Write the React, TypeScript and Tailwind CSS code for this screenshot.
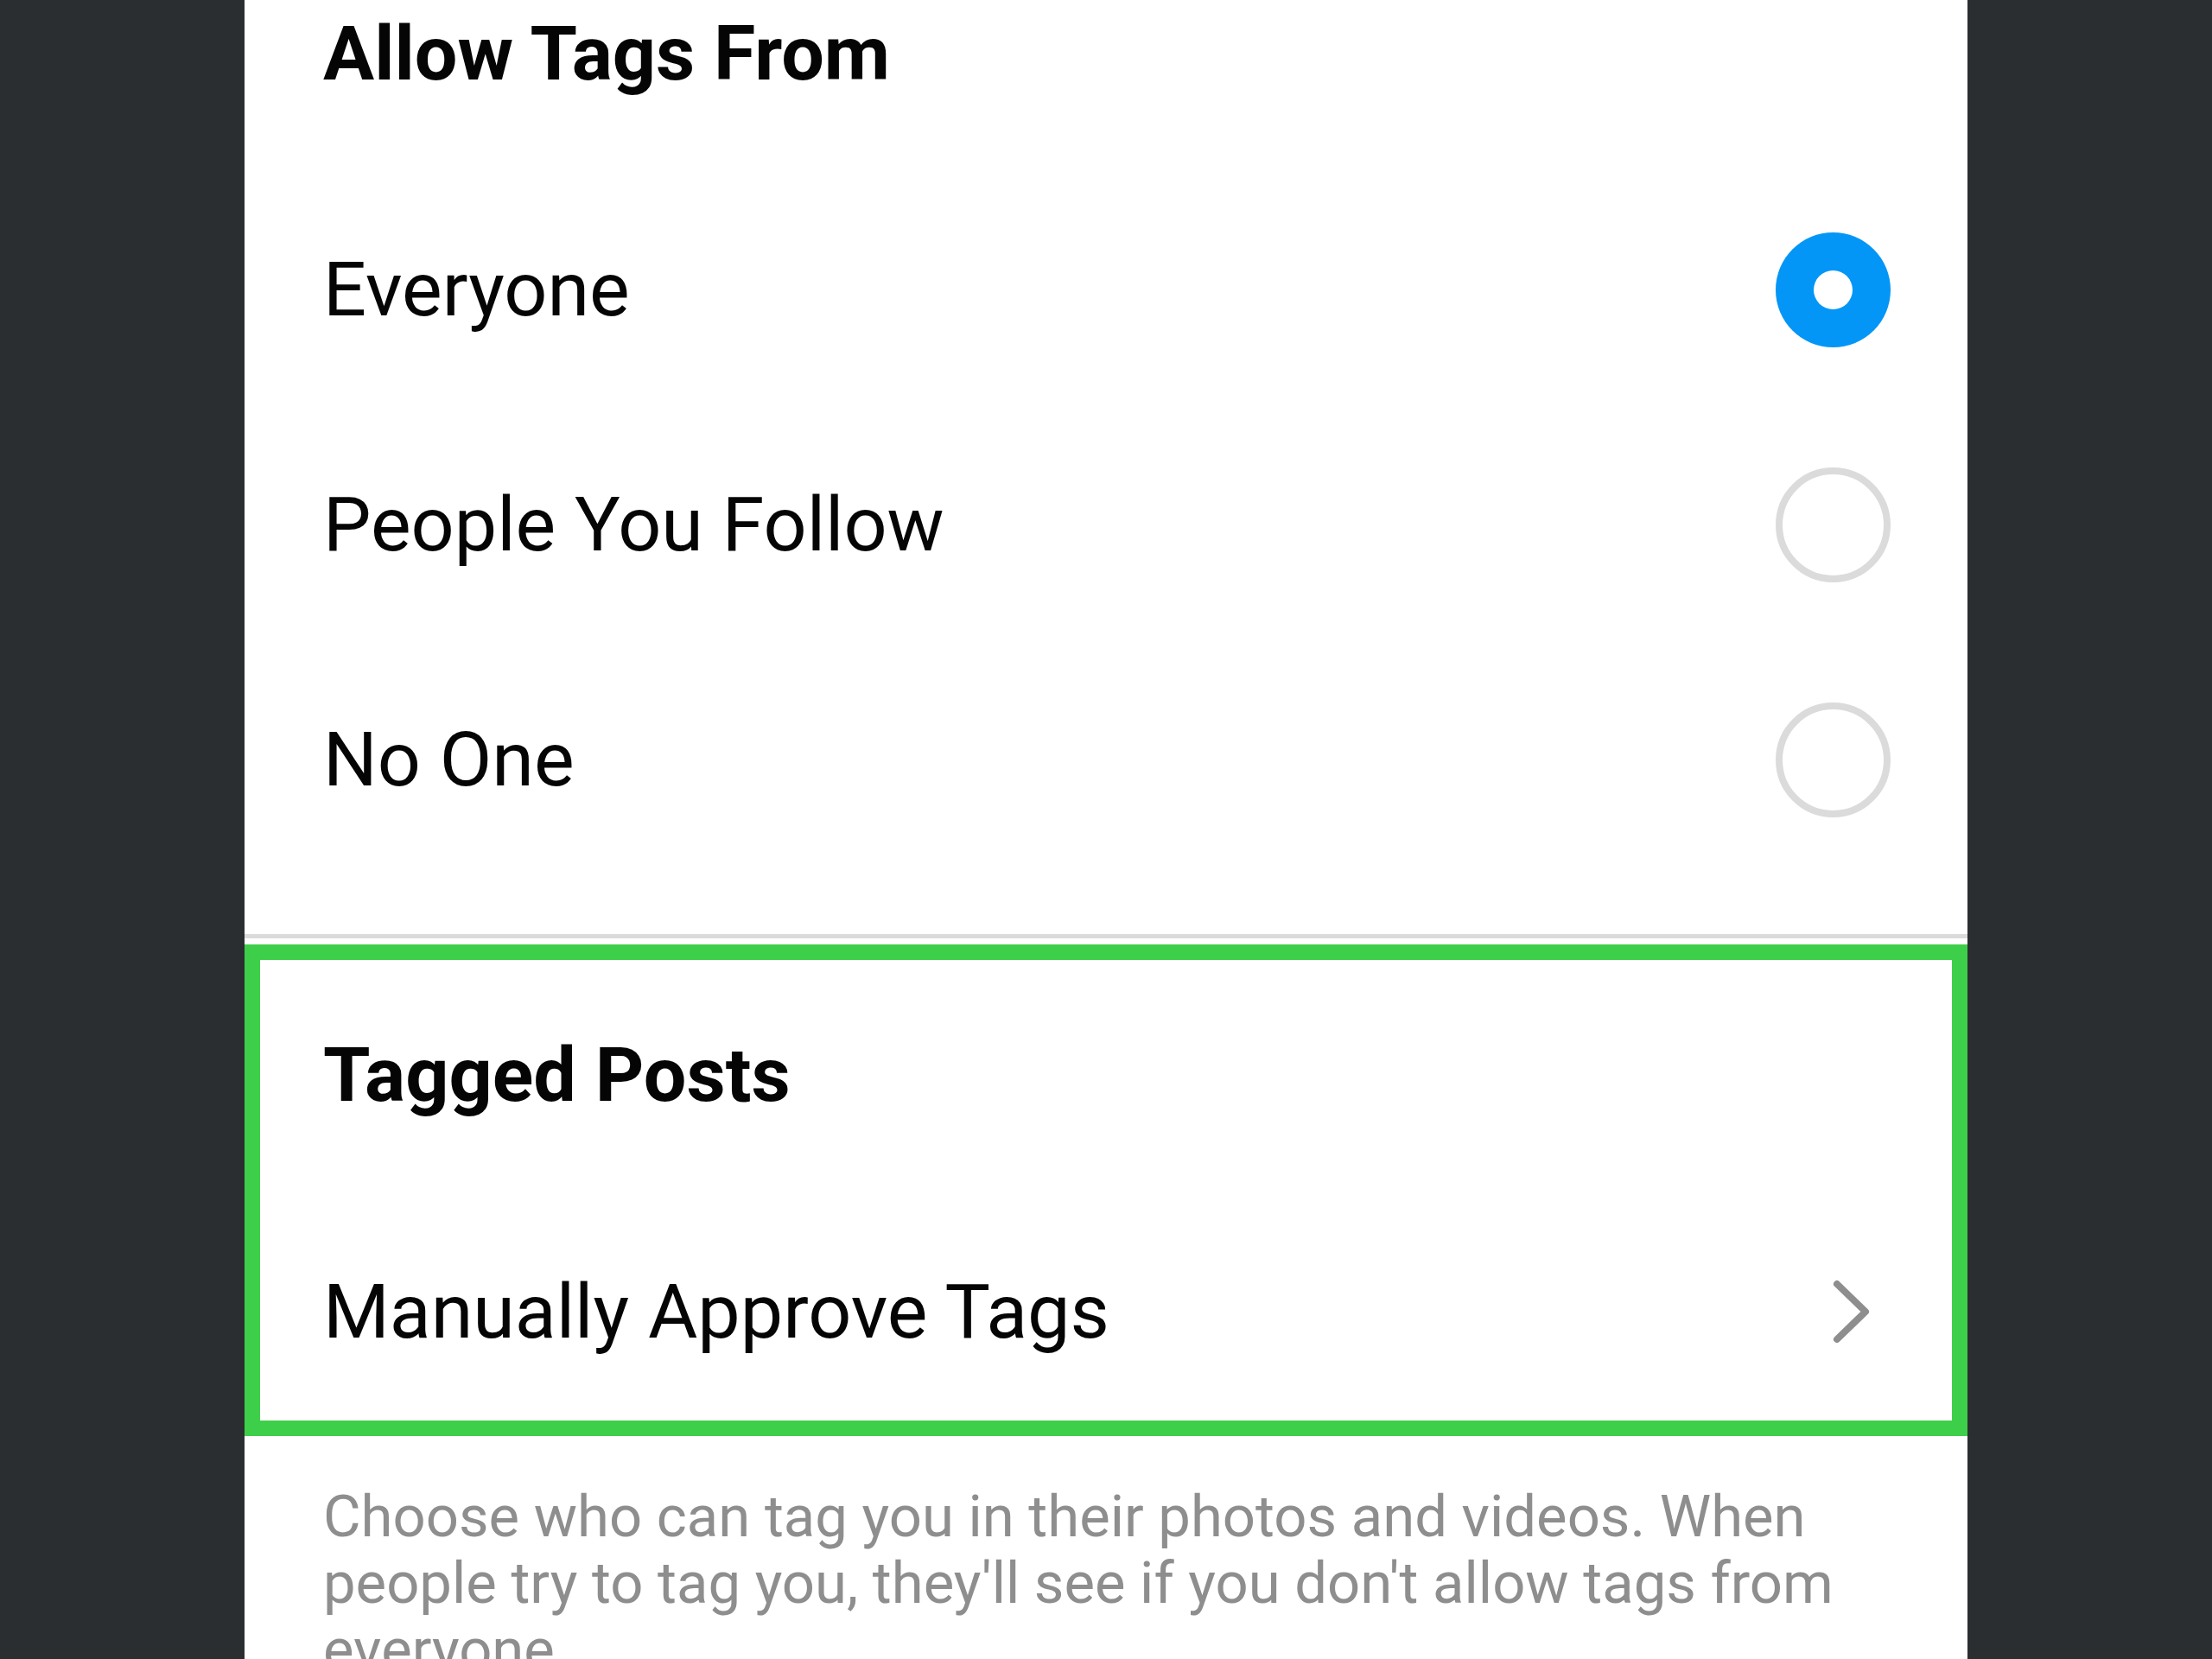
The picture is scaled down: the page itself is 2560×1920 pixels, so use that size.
import { useState } from "react";

const OPTIONS = ["Everyone", "People You Follow", "No One"];

function Radio({ checked }: { checked: boolean }) {
  if (checked) {
    return (
      <div className="flex h-[133px] w-[133px] shrink-0 items-center justify-center rounded-full bg-[#0396f6]">
        <div className="h-[45px] w-[45px] rounded-full bg-white" />
      </div>
    );
  }
  return <div className="h-[133px] w-[133px] shrink-0 rounded-full border-[8px] border-[#dbdbdb]" />;
}

function Chevron() {
  return (
    <svg width="49" height="80" viewBox="0 0 49 80" fill="none">
      <polyline
        points="8,8 41,40 8,72"
        stroke="#8e8e8e"
        strokeWidth={8}
        strokeLinecap="round"
        strokeLinejoin="round"
      />
    </svg>
  );
}

export default function App() {
  const [selected, setSelected] = useState("Everyone");

  return (
    <div className="flex h-[1920px] w-[2560px] overflow-hidden bg-[#2b2e31] font-['Roboto',sans-serif] text-[#050505]">
      <div className="w-[283px] shrink-0" />

      <div className="flex flex-1 flex-col bg-white">
        <div className="flex h-[199px] shrink-0 items-start px-[91px] pt-[18px]">
          <h2 className="text-[88px] font-bold leading-[88px]">Allow Tags From</h2>
        </div>

        {OPTIONS.map((opt) => (
          <button
            key={opt}
            onClick={() => setSelected(opt)}
            className="flex h-[272px] shrink-0 items-center justify-between pl-[91px] pr-[89px] text-left"
          >
            <span className="text-[88px] leading-[88px]">{opt}</span>
            <Radio checked={selected === opt} />
          </button>
        ))}

        <div className="mt-[66px] h-[5px] shrink-0 bg-[#dbdbdb]" />

        <div className="mt-[7px] flex shrink-0 flex-col border-[18px] border-[#3ecf4a]">
          <div className="flex h-[266px] items-center pl-[73px]">
            <h2 className="text-[88px] font-bold leading-[88px]">Tagged Posts</h2>
          </div>
          <div className="flex h-[267px] items-center justify-between pl-[73px] pr-[92px] pt-[14px]">
            <span className="text-[88px] leading-[88px]">Manually Approve Tags</span>
            <Chevron />
          </div>
        </div>

        <p className="shrink-0 pl-[91px] pr-[120px] pt-[55px] text-[67px] leading-[77px] text-[#8e8e8e]">
          Choose who can tag you in their photos and videos. When people try to tag you,
          they'll see if you don't allow tags from everyone.
        </p>
      </div>

      <div className="w-[283px] shrink-0" />
    </div>
  );
}
